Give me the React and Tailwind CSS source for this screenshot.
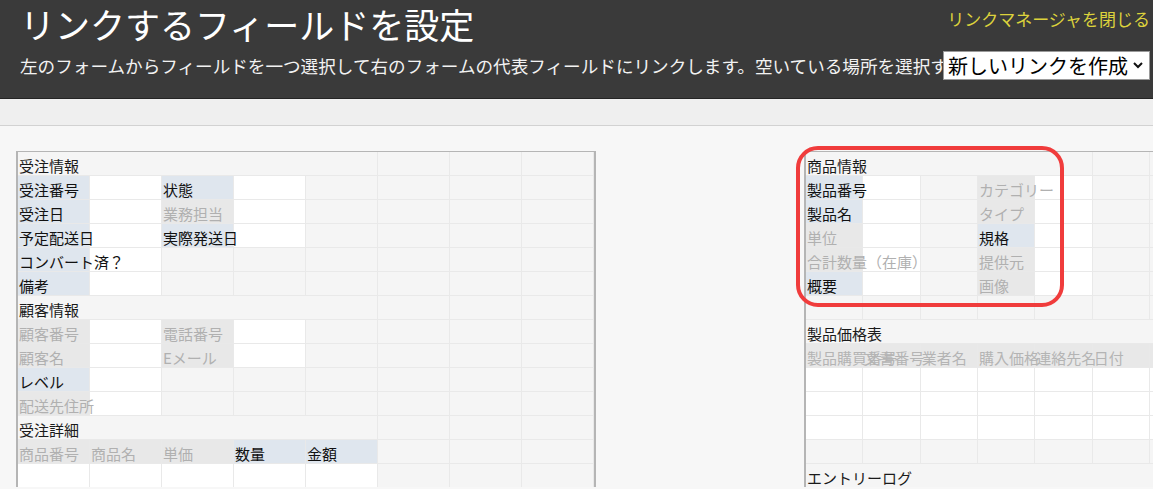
import React from "react";

const FONT = { fontFamily: '"Noto Sans CJK JP", "Noto Sans", sans-serif' };

function Cell({ c }) {
  const base =
    "relative flex items-center pt-[3px] whitespace-nowrap text-[15px] leading-none";
  let cls = "";
  switch (c.t) {
    case "h":
      cls = "bg-[#f5f5f5] text-[#1a1a1a] pl-[1px]";
      break;
    case "lb":
      cls = "bg-[#dfe6ee] text-[#111] pl-[1px]";
      break;
    case "lg":
      cls = "bg-[#e8e8e8] text-[#b0b0b0] pl-[1px]";
      break;
    case "th":
      cls = "bg-[#e8e8e8] text-[#b4b4b4] pl-[1px]";
      break;
    case "w":
      cls = "bg-white";
      break;
    default:
      cls = "bg-[#f5f5f5]";
  }
  const span =
    c.s === 5
      ? "col-span-5"
      : c.s === 7
      ? "col-span-7"
      : c.s === 8
      ? "col-span-8"
      : "";
  return (
    <div className={`${base} ${cls} ${span}`}>
      {c.x ? <span className="relative z-10">{c.x}</span> : null}
    </div>
  );
}

const h = (x, s) => ({ t: "h", x, s });
const lb = (x) => ({ t: "lb", x });
const lg = (x) => ({ t: "lg", x });
const th = (x) => ({ t: "th", x });
const w = { t: "w" };
const e = { t: "e" };

const leftRows = [
  [h("受注情報", 5), e, e, e],
  [lb("受注番号"), w, lb("状態"), w, e, e, e, e],
  [lb("受注日"), w, lg("業務担当"), w, e, e, e, e],
  [lb("予定配送日"), w, lb("実際発送日"), w, e, e, e, e],
  [lb("コンバート済？"), w, e, e, e, e, e, e],
  [lb("備考"), w, e, e, e, e, e, e],
  [h("顧客情報", 5), e, e, e],
  [lg("顧客番号"), w, lg("電話番号"), w, e, e, e, e],
  [lg("顧客名"), w, lg("Eメール"), w, e, e, e, e],
  [lb("レベル"), w, e, e, e, e, e, e],
  [lg("配送先住所"), w, e, e, e, e, e, e],
  [h("受注詳細", 5), e, e, e],
  [lg("商品番号"), lg("商品名"), lg("単価"), lb("数量"), lb("金額"), e, e, e],
  [w, w, w, w, w, e, e, e],
];

const rightRows = [
  [h("商品情報", 5), e, e],
  [lb("製品番号"), w, e, lg("カテゴリー"), w, e, e],
  [lb("製品名"), w, e, lg("タイプ"), w, e, e],
  [lg("単位"), w, e, lb("規格"), w, e, e],
  [lg("合計数量（在庫）"), w, e, lg("提供元"), w, e, e],
  [lb("概要"), w, e, lg("画像"), w, e, e],
  [e, e, e, e, e, e, e],
  [h("製品価格表", 7)],
  [th("製品購買番号"), th("文書番号"), th("業者名"), th("購入価格"), th("連絡先名"), th("日付"), th("")],
  [w, w, w, w, w, w, w],
  [w, w, w, w, w, w, w],
  [w, w, w, w, w, w, w],
  [e, e, e, e, e, e, e],
  [h("エントリーログ", 7)],
];

export default function App() {
  return (
    <div
      className="relative w-[1153px] h-[489px] overflow-hidden bg-[#f7f7f7]"
      style={FONT}
    >
      {/* Header */}
      <div className="h-[99px] bg-[#3a3a3a] border-b border-[#242424] pl-[20px] pr-[3px]">
        <div className="flex justify-between items-start">
          <div className="pt-[4px] text-[35px] leading-[40px] text-white whitespace-nowrap">
            リンクするフィールドを設定
          </div>
          <div className="mt-[7px] text-[17px] leading-[24px] text-[#dcd23c] whitespace-nowrap">
            リンクマネージャを閉じる
          </div>
        </div>
        <div className="mt-[7px] flex items-center">
          <div className="w-[923px] overflow-hidden whitespace-nowrap text-[17.6px] leading-[29px] text-[#f2f2f2]">
            左のフォームからフィールドを一つ選択して右のフォームの代表フィールドにリンクします。空いている場所を選択す
          </div>
          <div className="w-[207px] h-[29px] bg-white border border-[#9a9a9a] flex items-center justify-between pl-[4px] pr-[6px]">
            <span className="text-[20px] leading-none text-black whitespace-nowrap">
              新しいリンクを作成
            </span>
            <svg width="10" height="7" viewBox="0 0 10 7">
              <polyline
                points="1,1 5,5 9,1"
                fill="none"
                stroke="#111"
                strokeWidth="2"
              />
            </svg>
          </div>
        </div>
      </div>

      {/* Toolbar band */}
      <div className="h-[27px] bg-[#efefef] border-b border-[#d2d2d2]"></div>

      {/* Forms */}
      <div className="pt-[25px] flex items-start">
        <div className="ml-[16px] w-[580px] shrink-0 border-t border-x-2 border-[#b5b5b5] bg-[#e9e9e9]">
          <div className="grid grid-cols-[repeat(8,71px)] auto-rows-[23px] gap-px">
            {leftRows.flat().map((c, i) => (
              <Cell key={i} c={c} />
            ))}
          </div>
        </div>

        <div className="ml-[208px] w-[420px] shrink-0 border-t border-l-2 border-[#b5b5b5] bg-[#e9e9e9]">
          <div className="grid grid-cols-[repeat(7,56.33px)] auto-rows-[23px] gap-px">
            {rightRows.flat().map((c, i) => (
              <Cell key={i} c={c} />
            ))}
          </div>
        </div>
      </div>

      {/* Annotation */}
      <div className="absolute z-20 left-[796px] top-[146px] w-[268px] h-[161px] border-4 border-[#f03c3c] rounded-[22px]"></div>
    </div>
  );
}
